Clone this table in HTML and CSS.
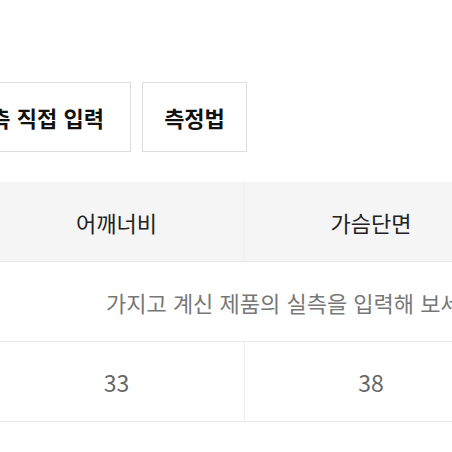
FILE: index.html
```html
<!DOCTYPE html>
<html lang="ko">
<head>
<meta charset="utf-8">
<link rel="stylesheet" href="styles.css">
</head>
<body>
<div class="page">
  <div class="btn-row">
    <div class="btn btn-wide">실측 직접 입력</div>
    <div class="btn btn-narrow">측정법</div>
  </div>
  <div class="table">
    <div class="row head">
      <div class="cell">어깨너비</div>
      <div class="cell">가슴단면</div>
    </div>
    <div class="row msg">
      <div class="msg-cell">가지고 계신 제품의 실측을 입력해 보세요</div>
    </div>
    <div class="row data">
      <div class="cell">33</div>
      <div class="cell">38</div>
    </div>
  </div>
</div>
</body>
</html>
```
FILE: styles.css
```css
html, body {
  margin: 0;
  padding: 0;
  background: #fff;
  overflow: hidden;
}
body {
  width: 452px;
  height: 452px;
  font-family: "Noto Sans CJK KR", "Noto Sans", sans-serif;
}
.page {
  padding-top: 82px;
}
.btn-row {
  display: flex;
  gap: 11px;
  margin-left: -57px;
}
.btn {
  box-sizing: border-box;
  height: 70px;
  border: 1px solid #dcdcdc;
  display: flex;
  align-items: center;
  justify-content: center;
  font-size: 22px;
  font-weight: 700;
  color: #111;
  white-space: nowrap;
}
.btn-wide { width: 188px; }
.btn-narrow { width: 105px; }
.table {
  margin-top: 30px;
  margin-left: -11px;
  width: 520px;
}
.row {
  display: grid;
  grid-template-columns: 256px 252px;
  height: 80px;
  box-sizing: border-box;
  border-bottom: 1px solid #ebebeb;
}
.row.head {
  background: #f5f5f5;
  border-bottom: 1px solid #ebebeb;
}
.row.msg {
  display: flex;
  align-items: center;
}
.cell {
  display: flex;
  align-items: center;
  justify-content: center;
  font-size: 22px;
}
.row .cell:first-child {
  border-right: 1px solid #ececec;
}
.head .cell {
  color: #222;
}
.head .cell:first-child {
  border-right: 1px solid #efefef;
}
.data .cell {
  color: #666;
  font-size: 23px;
}
.msg-cell {
  padding-left: 117px;
  font-size: 22px;
  color: #777;
  white-space: nowrap;
}
```
